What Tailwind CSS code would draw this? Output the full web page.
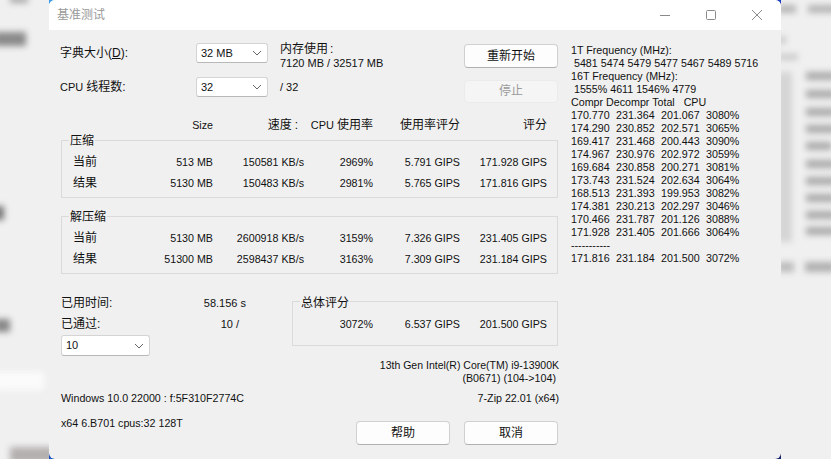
<!DOCTYPE html>
<html lang="zh-CN">
<head>
    <meta charset="UTF-8">
    <title>基准测试</title>
    <script src="https://cdn.jsdelivr.net/npm/@tailwindcss/browser@4"></script>
</head>
<body class="relative w-[831px] h-[459px] overflow-hidden bg-[#f0f0f0] text-[10.7px] leading-[13px] text-[#111] font-['Liberation_Sans','Noto_Sans_CJK_SC',sans-serif]">
    <!-- blurred desktop behind the dialog -->
    <div class="absolute inset-0 blur-[3px]">
        <div class="absolute left-[10px] top-[-4px] w-[18px] h-[7px] bg-[#aaa]"></div>
        <div class="absolute left-[-6px] top-[32px] w-[32px] h-[14px] bg-[#8a8a8a]"></div>
        <div class="absolute left-[-6px] top-[206px] w-[10px] h-[14px] bg-[#777]"></div>
        <div class="absolute left-[-6px] top-[319px] w-[16px] h-[13px] bg-[#888]"></div>
        <div class="absolute left-[-6px] top-[372px] w-[50px] h-[18px] bg-[#fbfbfb]"></div>
        <div class="absolute left-[10px] top-[447px] w-[44px] h-[16px] bg-[#b5b0b0]"></div>

        <div class="absolute left-[778px] top-[5px] w-[18px] h-[8px] bg-[#b5b5b5]"></div>
        <div class="absolute left-[808px] top-[5px] w-[30px] h-[8px] bg-[#b5b5b5]"></div>
        <div class="absolute left-[778px] top-[36px] w-[8px] h-[8px] bg-[#ccc]"></div>
        <div class="absolute left-[778px] top-[54px] w-[20px] h-[6px] bg-[#c8c8c8]"></div>
        <div class="absolute left-[778px] top-[72px] w-[14px] h-[170px] bg-[#d4d4d4]"></div>
        <div class="absolute left-[806px] top-[72px] w-[30px] h-[8px] bg-[#aaa]"></div>
        <div class="absolute left-[806px] top-[90px] w-[30px] h-[8px] bg-[#aaa]"></div>
        <div class="absolute left-[806px] top-[108px] w-[30px] h-[8px] bg-[#aaa]"></div>
        <div class="absolute left-[806px] top-[125px] w-[30px] h-[8px] bg-[#aaa]"></div>
        <div class="absolute left-[806px] top-[142px] w-[26px] h-[8px] bg-[#aaa]"></div>
        <div class="absolute left-[806px] top-[160px] w-[30px] h-[8px] bg-[#aaa]"></div>
        <div class="absolute left-[806px] top-[177px] w-[30px] h-[8px] bg-[#aaa]"></div>
        <div class="absolute left-[806px] top-[194px] w-[30px] h-[8px] bg-[#aaa]"></div>
        <div class="absolute left-[806px] top-[211px] w-[30px] h-[8px] bg-[#aaa]"></div>
        <div class="absolute left-[806px] top-[227px] w-[30px] h-[8px] bg-[#aaa]"></div>
        <div class="absolute left-[778px] top-[262px] w-[16px] h-[10px] bg-[#bbb]"></div>
        <div class="absolute left-[805px] top-[262px] w-[30px] h-[10px] bg-[#b0b0b0]"></div>
    </div>

    <!-- wallpaper showing through the rounded window corners -->
    <div class="absolute left-[49px] top-0 w-[7px] h-[7px] bg-[#3d9be8]"></div>
    <div class="absolute left-[774px] top-0 w-[7px] h-[7px] bg-[#1a3fc0]"></div>
    <div class="absolute left-[49px] top-[452px] w-[7px] h-[7px] bg-[#1650c0]"></div>
    <div class="absolute left-[774px] top-[452px] w-[7px] h-[7px] bg-[#16226e]"></div>

    <div class="relative ml-[49px] w-[732px] h-[459px] rounded-[6px] overflow-hidden bg-[#f0f0f0]">
        <!-- title bar -->
        <div class="flex items-center h-[30px] bg-white">
            <span class="ml-[8px] text-[12px] text-[#999]">基准测试</span>
            <div class="ml-auto flex items-center">
                <div class="flex justify-center w-[46px]">
                    <svg width="10" height="10" viewBox="0 0 10 10"><path d="M0 5.5H10" stroke="#8a8a8a" fill="none"/></svg>
                </div>
                <div class="flex justify-center w-[46px]">
                    <svg width="10" height="10" viewBox="0 0 10 10"><rect x="0.5" y="0.5" width="9" height="9" rx="1" stroke="#8a8a8a" fill="none"/></svg>
                </div>
                <div class="flex justify-center w-[46px] mr-[1px]">
                    <svg width="10" height="10" viewBox="0 0 10 10"><path d="M0 0L10 10M10 0L0 10" stroke="#8a8a8a" fill="none"/></svg>
                </div>
            </div>
        </div>

        <div class="flex pl-[11px]">
            <div class="w-[498px] pt-[13px]">
                <!-- dictionary / threads / buttons -->
                <div class="grid grid-cols-[136px_84px_184px_94px] grid-rows-[34px_33px]">
                    <div class="pt-[4px]"><span class="text-[12px]">字典大小(<span class="underline">D</span>):</span></div>
                    <div class="flex items-center justify-between w-[72px] h-[20px] pl-[4px] pr-[5px] bg-white border border-[#d4d4d4] border-b-[#b8b8b8] rounded-[3px]">
                        <span class="text-[11px] mt-[1px]">32 MB</span>
                        <svg width="10" height="6" viewBox="0 0 10 6"><path d="M1 1L5 5L9 1" stroke="#666" fill="none"/></svg>
                    </div>
                    <div class="flex flex-col">
                        <span class="text-[12px] leading-[14px] -mt-[1px]">内存使用<span class="ml-[2px]">:</span></span>
                        <span class="text-[11px] mt-[1px]">7120 MB / 32517 MB</span>
                    </div>
                    <div class="flex items-center justify-center h-[24px] mt-[1px] bg-[#fdfdfd] border border-[#d0d0d0] border-b-[#b0b0b0] rounded-[4px]"><span class="text-[12px]">重新开始</span></div>

                    <div class="pt-[4px]"><span class="text-[11px]">CPU </span><span class="text-[12px]">线程数:</span></div>
                    <div class="flex items-center justify-between w-[72px] h-[20px] pl-[4px] pr-[5px] bg-white border border-[#d4d4d4] border-b-[#b8b8b8] rounded-[3px]">
                        <span class="text-[11px]">32</span>
                        <svg width="10" height="6" viewBox="0 0 10 6"><path d="M1 1L5 5L9 1" stroke="#666" fill="none"/></svg>
                    </div>
                    <div class="pt-[4px]"><span class="text-[11px]">/ 32</span></div>
                    <div class="flex items-center justify-center h-[23px] mt-[3px] bg-[#f5f5f5] border border-[#ebebeb] rounded-[4px]"><span class="text-[12px] text-[#9a9a9a]">停止</span></div>
                </div>

                <!-- column headers -->
                <div class="grid grid-cols-[60px_80px_91px_69px_87px_87px] ml-[13px] mt-[8px] h-[14px] items-center text-right">
                    <span></span>
                    <span>Size</span>
                    <span class="pr-[6px] text-[12px]">速度<span class="ml-[3px]">:</span></span>
                    <span><span class="text-[11px]">CPU </span><span class="text-[12px]">使用率</span></span>
                    <span class="text-[12px]">使用率评分</span>
                    <span class="text-[12px]">评分</span>
                </div>

                <!-- compress -->
                <div class="relative mt-[8px] ml-[1px] h-[58px] pt-[11px] border border-[#dadada]">
                    <span class="absolute left-[7px] top-[-7px] px-[1px] bg-[#f0f0f0] text-[12px] leading-[14px]">压缩</span>
                    <div class="grid grid-cols-[60px_80px_91px_69px_87px_87px] auto-rows-[21px] items-center text-right ml-[11px]">
                        <span class="text-left text-[12px]">当前</span>
                        <span>513 MB</span><span>150581 KB/s</span><span>2969%</span><span>5.791 GIPS</span><span>171.928 GIPS</span>
                        <span class="text-left text-[12px]">结果</span>
                        <span>5130 MB</span><span>150483 KB/s</span><span>2981%</span><span>5.765 GIPS</span><span>171.816 GIPS</span>
                    </div>
                </div>

                <!-- decompress -->
                <div class="relative mt-[18px] ml-[1px] h-[58px] pt-[11px] border border-[#dadada]">
                    <span class="absolute left-[7px] top-[-7px] px-[1px] bg-[#f0f0f0] text-[12px] leading-[14px]">解压缩</span>
                    <div class="grid grid-cols-[60px_80px_91px_69px_87px_87px] auto-rows-[21px] items-center text-right ml-[11px]">
                        <span class="text-left text-[12px]">当前</span>
                        <span>5130 MB</span><span>2600918 KB/s</span><span>3159%</span><span>7.326 GIPS</span><span>231.405 GIPS</span>
                        <span class="text-left text-[12px]">结果</span>
                        <span>51300 MB</span><span>2598437 KB/s</span><span>3163%</span><span>7.309 GIPS</span><span>231.184 GIPS</span>
                    </div>
                </div>

                <!-- elapsed + total -->
                <div class="flex mt-[18px]">
                    <div class="w-[232px] pl-[1px] pt-[1px]">
                        <div class="flex items-center justify-between h-[21px] w-[185px]"><span class="text-[12px]">已用时间:</span><span class="text-[11px]">58.156 s</span></div>
                        <div class="flex items-center justify-between h-[21px] w-[178px]"><span class="text-[12px]">已通过:</span><span class="text-[11px]">10 /</span></div>
                        <div class="flex items-center justify-between w-[89px] h-[21px] pl-[4px] pr-[5px] bg-white border border-[#d4d4d4] border-b-[#b8b8b8] rounded-[3px]">
                            <span class="text-[11px]">10</span>
                            <svg width="10" height="6" viewBox="0 0 10 6"><path d="M1 1L5 5L9 1" stroke="#666" fill="none"/></svg>
                        </div>
                    </div>
                    <div class="relative w-[266px] h-[45px] mt-[9px] border border-[#dadada]">
                        <span class="absolute left-[7px] top-[-6px] px-[1px] bg-[#f0f0f0] text-[12px] leading-[14px]">总体评分</span>
                        <div class="grid grid-cols-[80px_87px_87px] h-[21px] mt-[12px] items-center text-right">
                            <span>3072%</span><span>6.537 GIPS</span><span>201.500 GIPS</span>
                        </div>
                    </div>
                </div>

                <!-- cpu name -->
                <div class="mt-[3px] text-right">
                    <div class="-mr-[1px] text-[10.5px]">13th Gen Intel(R) Core(TM) i9-13900K</div>
                    <div class="pr-[2px]">(B0671) (104-&gt;104)</div>
                </div>
                <div class="flex justify-between mt-[7px] pl-[1px] -mr-[1px]">
                    <span>Windows 10.0 22000 : f:5F310F2774C</span>
                    <span>7-Zip 22.01 (x64)</span>
                </div>

                <!-- footer -->
                <div class="flex mt-[12px] pl-[1px]">
                    <span>x64 6.B701 cpus:32 128T</span>
                    <div class="ml-auto flex gap-[14px] mt-[4px]">
                        <div class="flex items-center justify-center w-[94px] h-[24px] bg-[#fdfdfd] border border-[#d0d0d0] border-b-[#b0b0b0] rounded-[4px]"><span class="text-[12px]">帮助</span></div>
                        <div class="flex items-center justify-center w-[94px] h-[24px] bg-[#fdfdfd] border border-[#d0d0d0] border-b-[#b0b0b0] rounded-[4px]"><span class="text-[12px]">取消</span></div>
                    </div>
                </div>
            </div>

            <!-- log column -->
            <div class="ml-[13px] pt-[14px]">
                <div>1T Frequency (MHz):</div>
                <div class="whitespace-pre"> 5481 5474 5479 5477 5467 5489 5716</div>
                <div>16T Frequency (MHz):</div>
                <div class="whitespace-pre"> 1555% 4611 1546% 4779</div>
                <div class="whitespace-pre">Compr Decompr Total   CPU</div>
                <div class="grid grid-cols-[45px_45px_45px_auto]">
                    <span>170.770</span><span>231.364</span><span>201.067</span><span>3080%</span>
                    <span>174.290</span><span>230.852</span><span>202.571</span><span>3065%</span>
                    <span>169.417</span><span>231.468</span><span>200.443</span><span>3090%</span>
                    <span>174.967</span><span>230.976</span><span>202.972</span><span>3059%</span>
                    <span>169.684</span><span>230.858</span><span>200.271</span><span>3081%</span>
                    <span>173.743</span><span>231.524</span><span>202.634</span><span>3064%</span>
                    <span>168.513</span><span>231.393</span><span>199.953</span><span>3082%</span>
                    <span>174.381</span><span>230.213</span><span>202.297</span><span>3046%</span>
                    <span>170.466</span><span>231.787</span><span>201.126</span><span>3088%</span>
                    <span>171.928</span><span>231.405</span><span>201.666</span><span>3064%</span>
                </div>
                <div>-----------</div>
                <div class="grid grid-cols-[45px_45px_45px_auto]">
                    <span>171.816</span><span>231.184</span><span>201.500</span><span>3072%</span>
                </div>
            </div>
        </div>
    </div>
</body>
</html>
